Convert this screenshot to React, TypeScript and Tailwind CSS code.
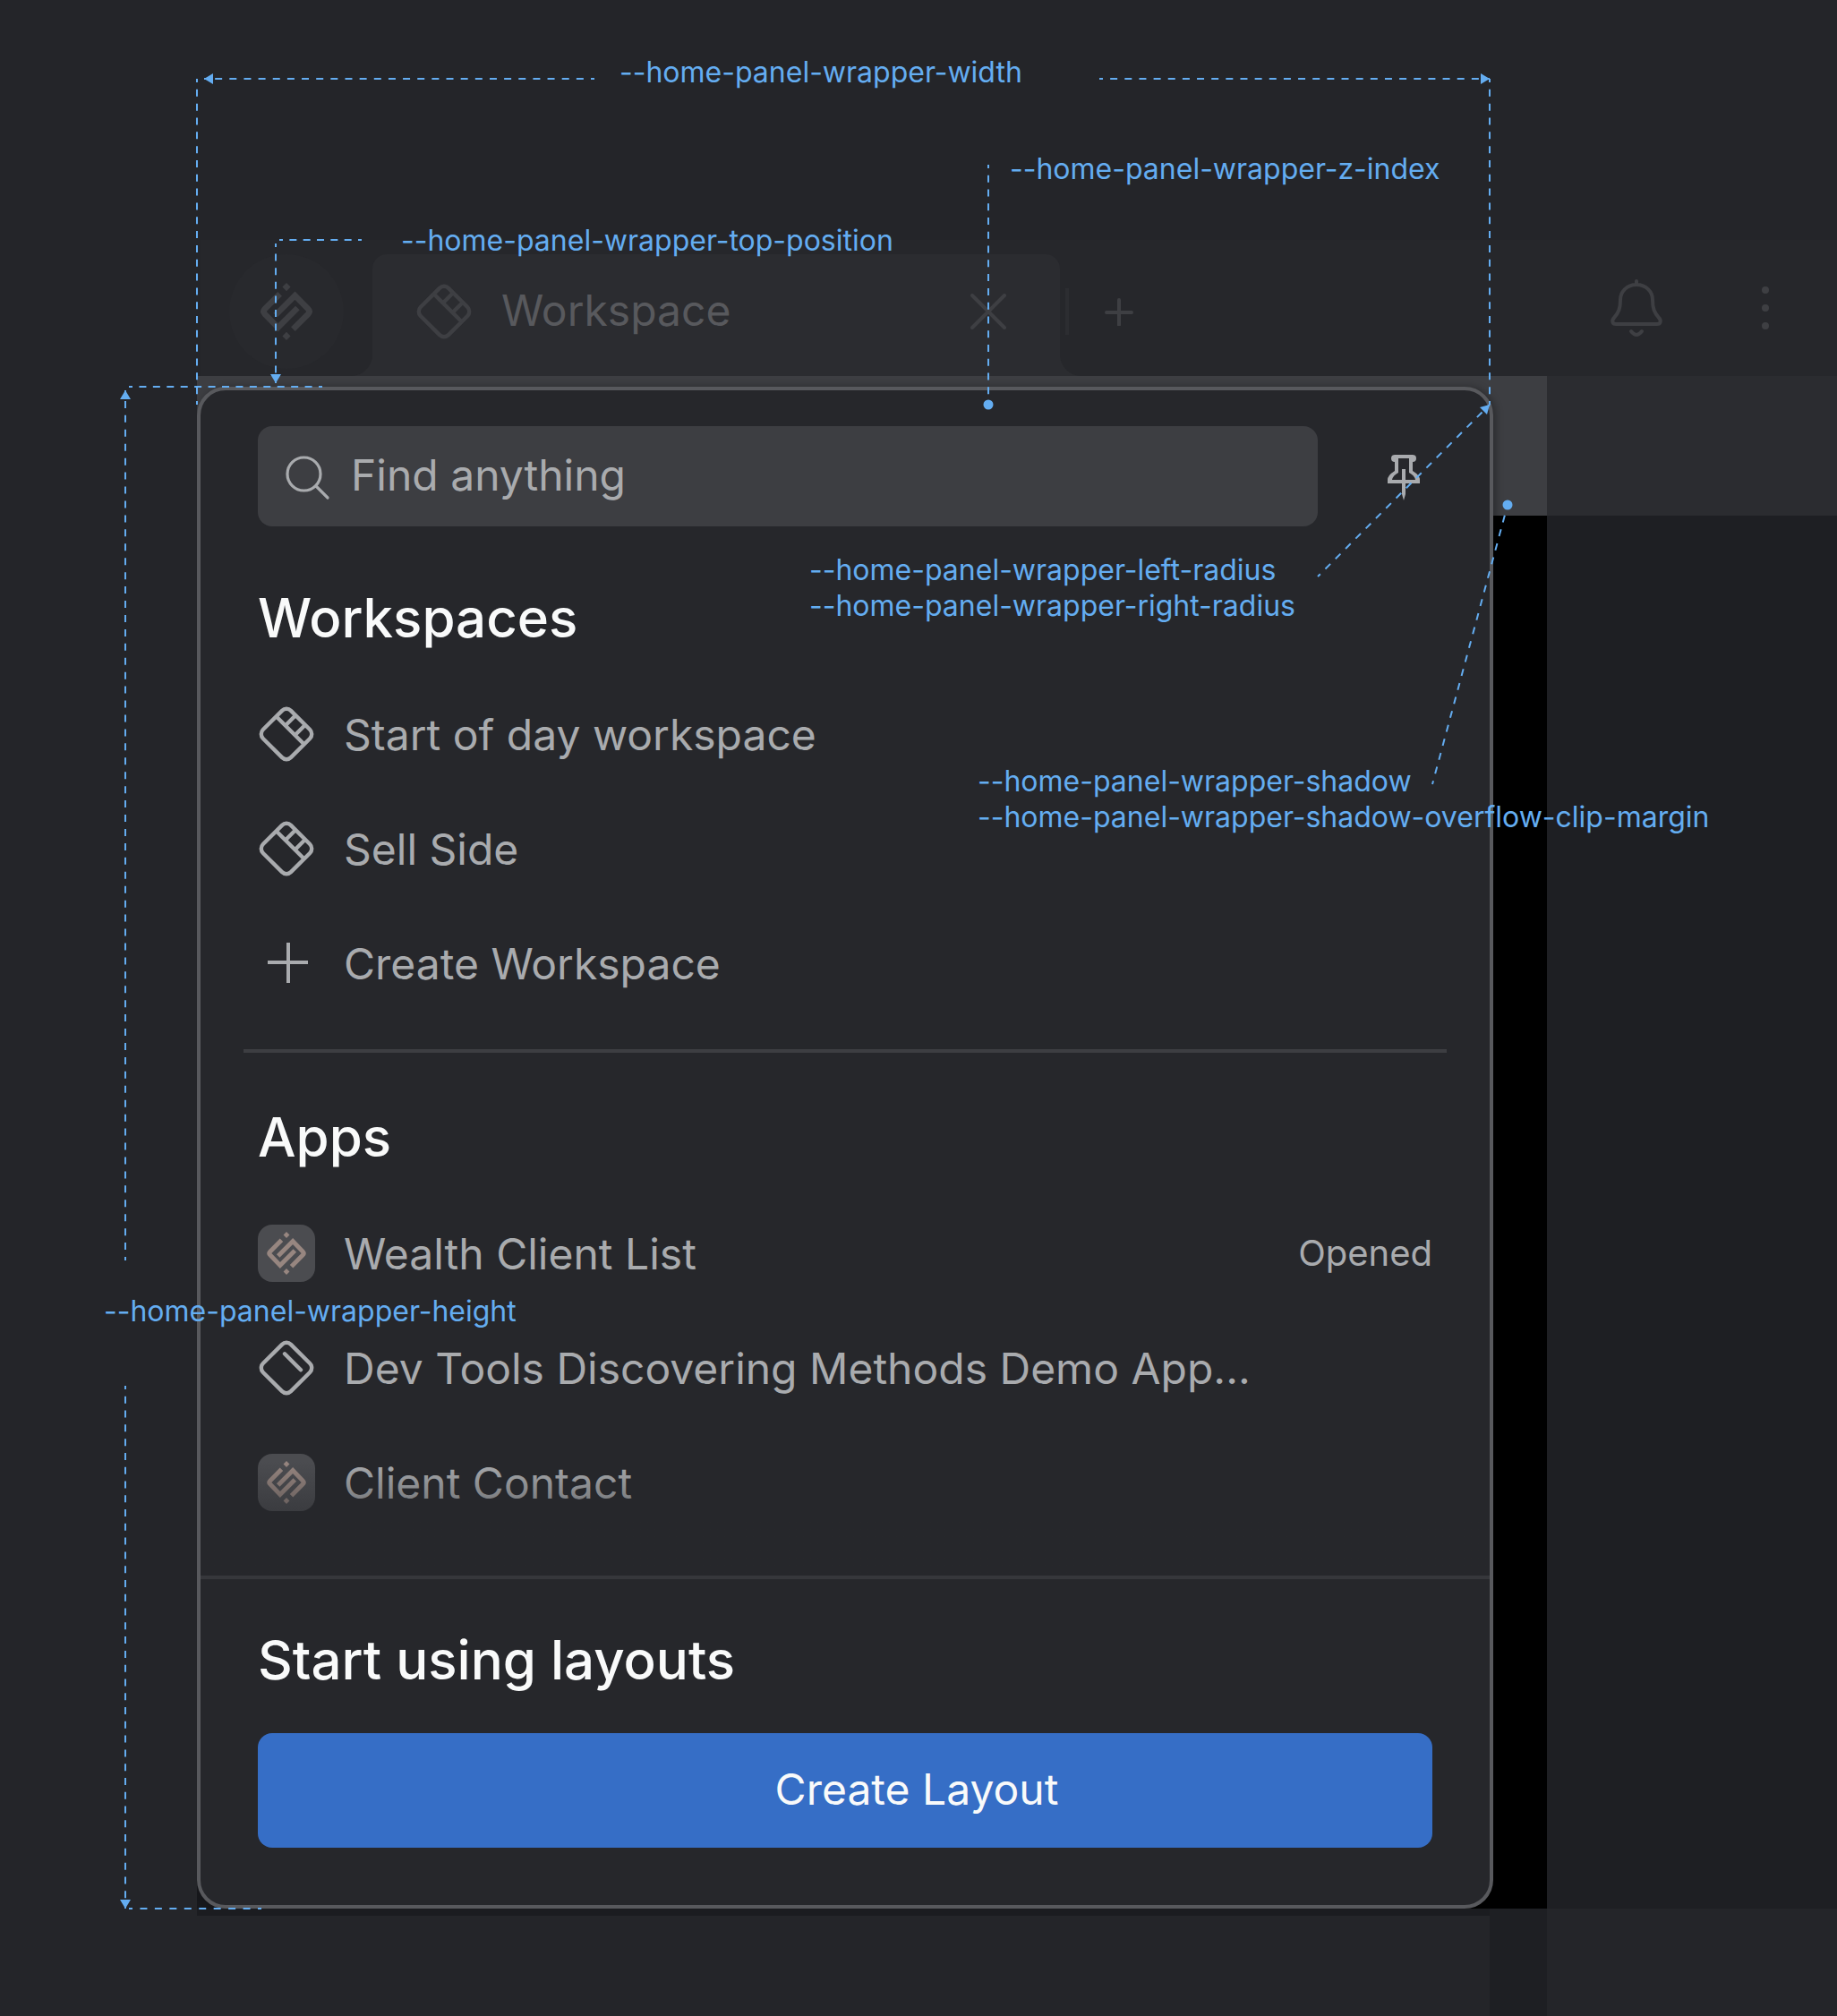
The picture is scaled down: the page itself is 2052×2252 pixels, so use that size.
import type { ReactNode } from "react";

function Logo({ className }: { className?: string }) {
  return (
    <svg viewBox="-32 -32 64 64" className={className} fill="none" stroke="currentColor" strokeWidth="6.6" aria-hidden="true">
      <path d="M-7.4 -19.6 L-24.2 -2.8 Q-27 0 -24.2 2.8 L-9.5 17.9 L12.4 -4" />
      <path d="M7.4 19.6 L24.2 2.8 Q27 0 24.2 -2.8 L9.5 -17.9 L-12.4 4" />
      <path d="M0 -32 L4.6 -27.4 L0 -22.8 L-4.6 -27.4 Z M0 22.8 L4.6 27.4 L0 32 L-4.6 27.4 Z" fill="currentColor" stroke="none" />
    </svg>
  );
}

function WorkspaceIcon({ className }: { className?: string }) {
  return (
    <svg viewBox="-32 -32 64 64" className={className} fill="none" stroke="currentColor" strokeWidth="4.4" aria-hidden="true">
      <rect x="-22" y="-22" width="44" height="44" rx="7" transform="rotate(45)" />
      <path d="M-11.5 -19.8 L19.8 11.5 M-1 -9.7 L10 -20.7 M9.7 1 L20.7 -10" />
    </svg>
  );
}

function AppIcon() {
  return (
    <svg viewBox="-32 -32 64 64" className="size-16" fill="none" stroke="currentColor" strokeWidth="4.4" strokeLinecap="round" aria-hidden="true">
      <rect x="-22" y="-22" width="44" height="44" rx="7" transform="rotate(45)" />
      <path d="M-2 -15.7 L16 2.3" />
    </svg>
  );
}

function PlusIcon({ className }: { className?: string }) {
  return (
    <svg viewBox="-32 -32 64 64" className={className} fill="none" stroke="currentColor" strokeWidth="4" aria-hidden="true">
      <path d="M-21 -1 H24 M2 -23 V22" />
    </svg>
  );
}

function AppTile() {
  return (
    <span className="flex size-16 items-center justify-center rounded-2xl bg-[#4b4c50] text-[#978680]">
      <Logo className="size-12" />
    </span>
  );
}

function Row({ icon, label, note }: { icon: ReactNode; label: string; note?: string }) {
  return (
    <li>
      <button type="button" className="flex h-32 w-full items-center gap-8 text-left text-[48px] leading-[64px] text-[#a9abae]">
        <span className="shrink-0">{icon}</span>
        <span className="flex-1 whitespace-nowrap pt-0.5">{label}</span>
        {note && <span className="text-[40px]">{note}</span>}
      </button>
    </li>
  );
}

function Header() {
  return (
    <header className="ml-[224px] mt-[268px] flex h-[152px] items-start bg-[#26272b] pt-4 text-[#3e3f43]">
      <button type="button" aria-label="Home" className="ml-8 flex size-32 items-center justify-center rounded-full bg-[#28292d]">
        <Logo className="size-16" />
      </button>
      <div className="relative ml-8 flex h-[136px] w-[768px] items-center rounded-t-2xl bg-[#2b2c30] pb-2 pl-12 pr-10">
        <svg viewBox="0 0 24 24" className="absolute -left-6 bottom-0 size-6" fill="#2b2c30" aria-hidden="true">
          <path d="M24 0 V24 H0 A24 24 0 0 0 24 0 Z" />
        </svg>
        <svg viewBox="0 0 24 24" className="absolute -right-6 bottom-0 size-6" fill="#2b2c30" aria-hidden="true">
          <path d="M0 0 V24 H24 A24 24 0 0 1 0 0 Z" />
        </svg>
        <WorkspaceIcon className="size-16" />
        <span className="ml-8 flex-1 pb-0.5 text-[48px] leading-[64px] text-[#58595d]">Workspace</span>
        <button type="button" aria-label="Close tab" className="p-5">
          <svg viewBox="0 0 40 40" className="size-10" fill="none" stroke="currentColor" strokeWidth="4" strokeLinecap="round" aria-hidden="true">
            <path d="M2 2 L38 38 M38 2 L2 38" />
          </svg>
        </button>
      </div>
      <div className="flex h-32 items-center">
        <span className="ml-1.5 h-[52px] w-1 bg-[#2c2d31]" />
        <button type="button" aria-label="Add tab" className="ml-10">
          <svg viewBox="0 0 32 32" className="size-8" fill="none" stroke="currentColor" strokeWidth="4" strokeLinecap="round" aria-hidden="true">
            <path d="M2 17 H30 M16 3 V31" />
          </svg>
        </button>
      </div>
      <div className="ml-auto flex h-30 items-center pr-12">
        <button type="button" aria-label="Notifications">
          <svg viewBox="0 0 64 64" className="size-16" fill="none" stroke="currentColor" strokeWidth="4" strokeLinecap="round" strokeLinejoin="round" aria-hidden="true">
            <path d="M32 2 V6 M32 6 C21 6 14 14 14 23 C14 33 12 37 7 43 C4 46 5 50 9 50 H55 C59 50 60 46 57 43 C52 37 50 33 50 23 C50 14 43 6 32 6 Z M26 58 Q32 66 38 58" />
          </svg>
        </button>
        <button type="button" aria-label="More" className="ml-20">
          <svg viewBox="0 0 64 64" className="size-16" fill="currentColor" aria-hidden="true">
            <circle cx="32" cy="12" r="4" />
            <circle cx="32" cy="32" r="4" />
            <circle cx="32" cy="52" r="4" />
          </svg>
        </button>
      </div>
    </header>
  );
}

function Panel() {
  return (
    <section className="z-10 col-start-1 row-start-1 mt-3 w-full max-w-[1448px] rounded-[32px] border-4 border-[#58595d] bg-[#26272b] shadow-[3px_0_8px_rgba(0,0,0,0.3)]">
      <div className="relative px-12 pb-10 pt-10">
        <div className="flex items-center justify-between px-4">
          <label className="flex h-28 w-[1184px] items-center gap-2 rounded-2xl bg-[#3d3e42] px-6 pb-0.5 text-[#a9abae]">
            <svg viewBox="0 0 64 64" className="size-16" fill="none" stroke="currentColor" strokeWidth="3.2" strokeLinecap="round" aria-hidden="true">
              <circle cx="27.5" cy="30.5" r="18.5" />
              <path d="M41 44 L54 57" />
            </svg>
            <input
              type="text"
              aria-label="Find anything"
              placeholder="Find anything"
              className="min-w-0 flex-1 bg-transparent pl-2 text-[48px] leading-[64px] outline-none placeholder:text-[#a9abae] placeholder:opacity-100"
            />
          </label>
          <button type="button" aria-label="Pin panel" className="text-[#a9abae]">
            <svg viewBox="0 0 64 64" className="size-16" aria-hidden="true">
              <path
                d="M22 8 H42 Q46 8 46 12 Q46 16 42 16 V26 Q50 31 50 36 V40 H34 V52 L32 59 L30 52 V40 H14 V36 Q14 31 22 26 V16 Q18 16 18 12 Q18 8 22 8 Z M26 12 V28 Q20 31 19 36 H30 V24 H34 V36 H45 Q44 31 38 28 V12 Z"
                fill="currentColor"
                fillRule="evenodd"
              />
            </svg>
          </button>
        </div>

        <h2 className="mt-16 px-4 text-[60px] font-medium leading-[76px] text-[#f9fafa]">Workspaces</h2>
        <ul className="mt-7 px-4">
          <Row icon={<WorkspaceIcon className="size-16" />} label="Start of day workspace" />
          <Row icon={<WorkspaceIcon className="size-16" />} label="Sell Side" />
          <Row icon={<PlusIcon className="size-16" />} label="Create Workspace" />
        </ul>

        <hr className="mt-8 border-t-4 border-[#3d3e42]" />

        <h2 className="mt-14 px-4 text-[60px] font-medium leading-[76px] text-[#f9fafa]">Apps</h2>
        <ul className="mt-7 px-4">
          <Row icon={<AppTile />} label="Wealth Client List" note="Opened" />
          <Row icon={<AppIcon />} label="Dev Tools Discovering Methods Demo App..." />
          <Row icon={<AppTile />} label="Client Contact" />
        </ul>
        <div className="pointer-events-none absolute inset-x-0 bottom-0 h-32 bg-linear-to-b from-[#26272b]/0 to-[#26272b]" />
      </div>

      <div className="border-t-4 border-[#36373b] px-16 pb-16 pt-[52px]">
        <h2 className="text-[60px] font-medium leading-[76px] text-[#f9fafa]">Start using layouts</h2>
        <button type="button" className="mt-11 h-32 w-full rounded-2xl bg-[#366ec6] pb-0.5 pl-40 text-center text-[48px] leading-[64px] text-[#f9fafa]">
          Create Layout
        </button>
      </div>
    </section>
  );
}

const labels = [
  { place: "left-[692px] top-[61px]", lines: ["--home-panel-wrapper-width"] },
  { place: "left-[1128px] top-[169px]", lines: ["--home-panel-wrapper-z-index"] },
  { place: "left-[448px] top-[249px]", lines: ["--home-panel-wrapper-top-position"] },
  { place: "left-[904px] top-[617px]", lines: ["--home-panel-wrapper-left-radius", "--home-panel-wrapper-right-radius"] },
  { place: "left-[1092px] top-[853px]", lines: ["--home-panel-wrapper-shadow", "--home-panel-wrapper-shadow-overflow-clip-margin"] },
  { place: "left-[116px] top-[1445px]", lines: ["--home-panel-wrapper-height"] },
];

const guides = [
  [220, 88, 220, 452],
  [664, 88, 228, 88],
  [1228, 88, 1664, 88],
  [1664, 88, 1664, 452],
  [404, 268, 312, 268],
  [308, 272, 308, 428],
  [144, 432, 360, 432],
  [140, 1408, 140, 436],
  [140, 1548, 140, 2132],
  [144, 2132, 292, 2132],
  [1104, 184, 1104, 452],
  [1472, 644, 1664, 452],
  [1600, 876, 1684, 564],
];

const DASH = 8;

function Guide({ points: [x1, y1, x2, y2] }: { points: number[] }) {
  // Stretch the gap so that each line starts and ends on half a dash.
  const length = Math.hypot(x2 - x1, y2 - y1);
  const period = length / Math.round(length / (DASH * 2));
  return <line x1={x1} y1={y1} x2={x2} y2={y2} strokeDasharray={`${DASH} ${period - DASH}`} strokeDashoffset={DASH / 2} />;
}

function Annotations() {
  return (
    <div className="pointer-events-none absolute inset-0 z-20 text-[#64adf1]">
      <svg className="h-full w-full" fill="none" stroke="currentColor" strokeWidth="2" aria-hidden="true">
        {guides.map((points) => (
          <Guide key={points.join()} points={points} />
        ))}
        <g fill="currentColor" stroke="none">
          <path d="M228 88 L238 82 V94 Z" />
          <path d="M1664 88 L1654 82 V94 Z" />
          <path d="M308 428 L302 418 H314 Z" />
          <path d="M140 436 L134 446 H146 Z" />
          <path d="M140 2132 L134 2122 H146 Z" />
          <path d="M1664 452 L1653 455 L1661 463 Z" />
          <circle cx="1104" cy="452" r="5.5" />
          <circle cx="1684" cy="564" r="5.5" />
        </g>
      </svg>
      {labels.map(({ place, lines }) => (
        <p key={lines[0]} className={`absolute whitespace-nowrap text-[32px] leading-[40px] ${place}`}>
          {lines.map((line) => (
            <span key={line} className="block">
              {line}
            </span>
          ))}
        </p>
      ))}
    </div>
  );
}

export default function App() {
  return (
    <main className="relative flex min-h-screen flex-col overflow-hidden bg-[#242529] font-['Inter',sans-serif]">
      <Header />
      <div className="flex pl-[220px]">
        <div className="grid w-full max-w-[1508px] overflow-hidden">
          <div className="col-start-1 row-start-1 flex flex-col">
            <div className="h-[156px] bg-[#3d3e42]" />
            <div className="flex-1 bg-linear-to-r from-[#17181c] from-10% to-black to-50%" />
          </div>
          <Panel />
        </div>
        <div className="flex flex-1 flex-col">
          <div className="h-[156px] bg-[#2b2c30]" />
          <div className="flex-1 bg-[#1e1f23]" />
        </div>
      </div>
      <div className="flex flex-1 pl-[220px]">
        <div className="h-2 w-full max-w-[1444px] bg-[#1b1c20]" />
        <div className="w-16 bg-[#1e1f23]" />
      </div>
      <Annotations />
    </main>
  );
}
